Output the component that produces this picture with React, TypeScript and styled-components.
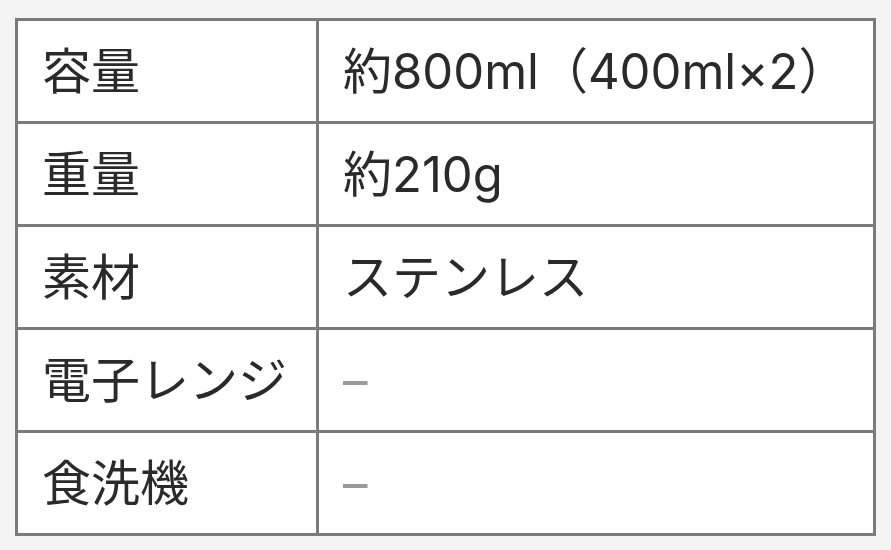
import styled, { createGlobalStyle } from 'styled-components';

const GlobalStyle = createGlobalStyle`
    html, body {
        margin: 0;
        padding: 0;
        background: #f4f4f4;
    }
    body {
        font-family: "Inter", "Noto Sans CJK JP", sans-serif;
        color: #2a2a2a;
    }
`

const Page = styled.div`
    padding: 18px 15px 0 15px;
`

const SpecTable = styled.table`
    width: 861px;
    border-collapse: collapse;
    background: #ffffff;
    border: 3px solid #7b7b7b;
`

const Row = styled.tr`
    height: 103px;
`

const Label = styled.th`
    width: 250px;
    padding: 0 24px;
    border: 3px solid #7b7b7b;
    text-align: left;
    font-weight: 400;
    font-size: 49px;
    line-height: 1;
    white-space: nowrap;
`

const Value = styled.td<{ $empty?: boolean }>`
    padding: 0 24px;
    border: 3px solid #7b7b7b;
    font-size: 49px;
    line-height: 1;
    white-space: nowrap;
    color: ${props => props.$empty ? '#9a9a9a' : '#2a2a2a'};
`

const specs = [
    { label: '容量', value: '約800ml（400ml×2）' },
    { label: '重量', value: '約210g' },
    { label: '素材', value: 'ステンレス' },
    { label: '電子レンジ', value: '–', empty: true },
    { label: '食洗機', value: '–', empty: true },
]

function App() {
    return (
        <>
            <GlobalStyle />
            <Page>
                <SpecTable>
                    <tbody>
                        {specs.map(s => (
                            <Row key={s.label}>
                                <Label>{s.label}</Label>
                                <Value $empty={s.empty}>{s.value}</Value>
                            </Row>
                        ))}
                    </tbody>
                </SpecTable>
            </Page>
        </>
    );
}

export default App;
